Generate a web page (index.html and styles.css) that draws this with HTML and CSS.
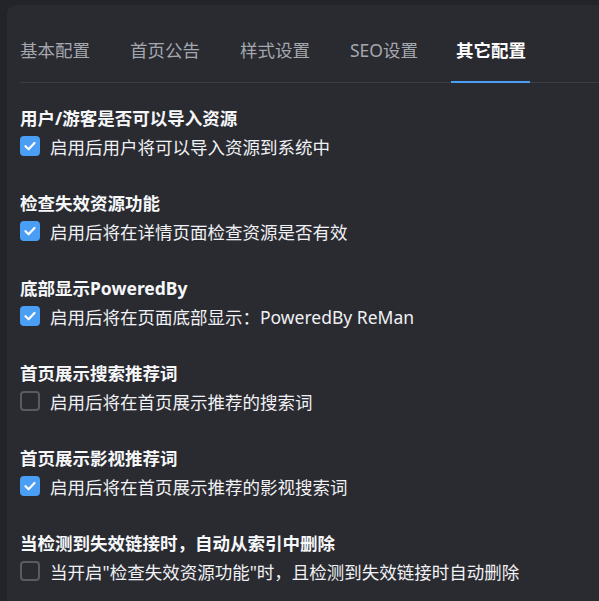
FILE: index.html
```html
<!DOCTYPE html>
<html lang="zh-CN">
<head>
<meta charset="utf-8">
<link rel="stylesheet" href="styles.css">
</head>
<body>
<div class="card">
  <div class="tabs">
    <div class="tab">基本配置</div>
    <div class="tab">首页公告</div>
    <div class="tab">样式设置</div>
    <div class="tab">SEO设置</div>
    <div class="tab active">其它配置<span class="bar"></span></div>
  </div>
  <div class="sections">
    <div class="section">
      <div class="title">用户/游客是否可以导入资源</div>
      <label class="row"><span class="box checked"><svg viewBox="0 0 20 20"><path d="M5.5 10.2 L8.6 13.2 L14.5 7" /></svg></span><span class="text">启用后用户将可以导入资源到系统中</span></label>
    </div>
    <div class="section">
      <div class="title">检查失效资源功能</div>
      <label class="row"><span class="box checked"><svg viewBox="0 0 20 20"><path d="M5.5 10.2 L8.6 13.2 L14.5 7" /></svg></span><span class="text">启用后将在详情页面检查资源是否有效</span></label>
    </div>
    <div class="section">
      <div class="title">底部显示PoweredBy</div>
      <label class="row"><span class="box checked"><svg viewBox="0 0 20 20"><path d="M5.5 10.2 L8.6 13.2 L14.5 7" /></svg></span><span class="text">启用后将在页面底部显示：PoweredBy ReMan</span></label>
    </div>
    <div class="section">
      <div class="title">首页展示搜索推荐词</div>
      <label class="row"><span class="box"></span><span class="text">启用后将在首页展示推荐的搜索词</span></label>
    </div>
    <div class="section">
      <div class="title">首页展示影视推荐词</div>
      <label class="row"><span class="box checked"><svg viewBox="0 0 20 20"><path d="M5.5 10.2 L8.6 13.2 L14.5 7" /></svg></span><span class="text">启用后将在首页展示推荐的影视搜索词</span></label>
    </div>
    <div class="section">
      <div class="title">当检测到失效链接时，自动从索引中删除</div>
      <label class="row"><span class="box"></span><span class="text">当开启"检查失效资源功能"时，且检测到失效链接时自动删除</span></label>
    </div>
  </div>
</div>
</body>
</html>
```

FILE: styles.css
```css
html, body {
  margin: 0;
  padding: 0;
  background: #232429;
  overflow: hidden;
  height: 100%;
}
body {
  box-sizing: border-box;
  padding: 5px 0 0 7px;
  font-family: "Noto Sans", "Noto Sans CJK SC", sans-serif;
  font-size: 17.5px;
  color: #e8e9ec;
}
.card {
  box-sizing: border-box;
  height: 100%;
  overflow: hidden;
  background: #2a2b31;
  border-radius: 9px 0 0 0;
  padding: 13px 0 0 13px;
}
.tabs {
  display: flex;
  border-bottom: 1px solid #3c3d42;
  height: 64px;
}
.tab {
  position: relative;
  line-height: 64px;
  padding: 0 20px;
  color: #a4a7ae;
  white-space: nowrap;
}
.tab:first-child {
  padding-left: 0;
}
.tab.active {
  color: #ffffff;
  font-weight: 700;
  padding-left: 18px;
}
.tab .bar {
  position: absolute;
  left: 13px;
  right: 16px;
  bottom: -1px;
  height: 2px;
  background: #4a9ff5;
}
.sections {
  display: flex;
  flex-direction: column;
  gap: 31px;
  padding-top: 23px;
}
.section {
  display: flex;
  flex-direction: column;
  gap: 2px;
}
.title {
  line-height: 24px;
  font-weight: 700;
  color: #f6f7f9;
}
.row {
  display: flex;
  align-items: center;
  gap: 10px;
  height: 28px;
}
.box {
  box-sizing: border-box;
  width: 20px;
  height: 20px;
  border: 2px solid #5a5b61;
  border-radius: 4px;
  flex: none;
}
.box.checked {
  background: #4a9ff5;
  border-color: #4a9ff5;
  display: flex;
  align-items: center;
  justify-content: center;
}
.box svg {
  width: 20px;
  height: 20px;
  flex: none;
}
.box path {
  fill: none;
  stroke: #ffffff;
  stroke-width: 2.2;
  stroke-linecap: round;
  stroke-linejoin: round;
}
.text {
  white-space: nowrap;
  color: #f0f1f4;
}
```
